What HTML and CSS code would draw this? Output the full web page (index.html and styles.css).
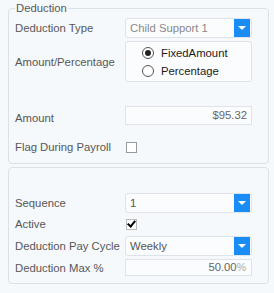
FILE: index.html
```html
<!DOCTYPE html>
<html lang="en">
<head>
    <meta charset="UTF-8">
    <title>Deduction</title>
    <link rel="stylesheet" href="styles.css">
</head>
<body>
    <div class="panel">
        <fieldset class="group">
            <legend>Deduction</legend>
            <div class="row first">
                <span class="label">Deduction Type</span>
                <div class="select">
                    <span class="value">Child Support 1</span>
                    <span class="drop"></span>
                </div>
            </div>
            <div class="row radios-row">
                <span class="label">Amount/Percentage</span>
                <div class="radios">
                    <label class="radio checked"><span class="dot"></span>FixedAmount</label>
                    <label class="radio"><span class="dot"></span>Percentage</label>
                </div>
            </div>
            <div class="row amount-row">
                <span class="label">Amount</span>
                <div class="input">$95.32</div>
            </div>
            <div class="row flag-row">
                <span class="label">Flag During Payroll</span>
                <span class="check"></span>
            </div>
        </fieldset>

        <fieldset class="group second">
            <div class="row">
                <span class="label">Sequence</span>
                <div class="select">
                    <span class="value dark">1</span>
                    <span class="drop"></span>
                </div>
            </div>
            <div class="row active-row">
                <span class="label">Active</span>
                <span class="check on"></span>
            </div>
            <div class="row cycle-row">
                <span class="label">Deduction Pay Cycle</span>
                <div class="select">
                    <span class="value dark">Weekly</span>
                    <span class="drop"></span>
                </div>
            </div>
            <div class="row max-row">
                <span class="label">Deduction Max %</span>
                <div class="input small">50.00<span class="pct">%</span></div>
            </div>
        </fieldset>
    </div>
</body>
</html>
```

FILE: styles.css
```css
/* Page */
body {
    margin: 0;
    background-color: #f5f9fc;
    font-family: "Liberation Sans", Arial, sans-serif;
    font-size: 11.3px;
    color: #575757;
}
.panel {
    padding: 1px 5px 0 8px;
}

/* Group boxes */
.group {
    margin: 0;
    padding: 0 5px 6px 6px;
    border: 1px solid #dbe1e6;
    border-radius: 4px;
}
.group legend {
    padding: 0 1px;
    line-height: 14px;
    color: #575757;
}
.second {
    margin-top: 3px;
    padding-top: 25px;
    padding-bottom: 7px;
}

/* Rows */
.row {
    display: flex;
    align-items: center;
    height: 20px;
}
.row.first {
    margin-top: 3px;
}
.label {
    width: 110px;
    flex: none;
    white-space: nowrap;
}
.radios-row {
    margin-top: 3px;
    height: 41px;
}
.amount-row {
    margin-top: 24px;
    height: 19px;
}
.amount-row .label {
    padding-top: 5px;
}
.flag-row {
    margin-top: 12px;
}
.active-row {
    margin-top: 1px;
}
.cycle-row {
    margin-top: 2px;
}
.max-row {
    margin-top: 3px;
    height: 17px;
}

/* Dropdown */
.select {
    position: relative;
    width: 125px;
    height: 18px;
    border: 1px solid #dde3e8;
    border-radius: 3px;
    background-color: #fbfcfd;
    display: flex;
    align-items: center;
}
.select .value {
    padding-left: 4px;
    color: #8a8a8a;
}
.select .value.dark {
    color: #555;
}
.drop {
    position: absolute;
    right: 1px;
    top: 0;
    width: 16px;
    height: 18px;
    background-color: #1a8cf5;
}
.drop::after {
    content: "";
    position: absolute;
    left: 4px;
    top: 7px;
    border-left: 4px solid transparent;
    border-right: 4px solid transparent;
    border-top: 4px solid #fff;
}

/* Radio box */
.radios {
    width: 109px;
    height: 39px;
    border: 1px solid #dde3e8;
    border-radius: 3px;
    background-color: #fbfcfd;
    display: flex;
    flex-direction: column;
    justify-content: center;
    gap: 5px;
    padding-left: 16px;
}
.radio {
    display: flex;
    align-items: center;
    color: #1a1a1a;
    height: 13px;
}
.radio .dot {
    width: 10px;
    height: 10px;
    border: 1px solid #555;
    border-radius: 50%;
    background-color: #fff;
    margin-right: 7px;
    position: relative;
}
.radio.checked .dot::after {
    content: "";
    position: absolute;
    left: 2px;
    top: 2px;
    width: 6px;
    height: 6px;
    border-radius: 50%;
    background-color: #222;
}

/* Text inputs */
.input {
    width: 121px;
    height: 17px;
    line-height: 17px;
    border: 1px solid #dde3e8;
    background-color: #fbfcfd;
    text-align: right;
    padding-right: 4px;
    color: #666;
}
.input.small {
    height: 15px;
    line-height: 15px;
    padding-right: 5px;
    width: 120px;
}
.pct {
    color: #aaa;
    font-size: 10.5px;
}

/* Checkboxes */
.check {
    width: 9px;
    height: 9px;
    border: 1px solid #999;
    background-color: #fff;
    margin-left: 1px;
    position: relative;
}
.check.on {
    border-color: #bbb;
}
.check.on::after {
    content: "";
    position: absolute;
    left: 2px;
    top: -1px;
    width: 3px;
    height: 6px;
    border-right: 2px solid #000;
    border-bottom: 2px solid #000;
    transform: rotate(40deg);
}
```
